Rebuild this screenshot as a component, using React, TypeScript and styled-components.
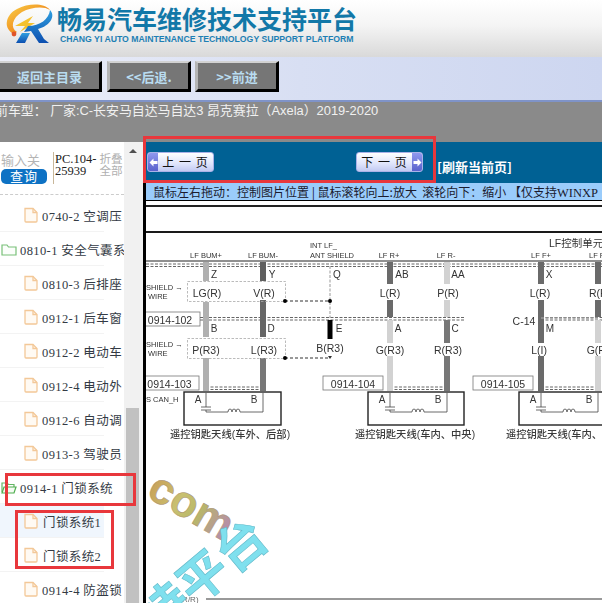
import React from "react";
import styled, { createGlobalStyle } from "styled-components";

const Global = createGlobalStyle`
  html, body { margin: 0; padding: 0; background: #fff; overflow: hidden; }
  * { box-sizing: border-box; }
`;

const CJK = `"Noto Sans CJK SC", sans-serif`;

const Page = styled.div`
  position: relative;
  width: 602px;
  height: 603px;
  overflow: hidden;
  font-family: "Liberation Sans", ${CJK};
`;

const Header = styled.header`
  height: 57px;
  display: flex;
  align-items: flex-start;
  background: linear-gradient(180deg, #ffffff 0%, #f4f4f4 45%, #d9d9d9 100%);
`;

const Logo = styled.svg`
  width: 56px;
  height: 46px;
  flex: none;
  margin-top: 1px;
`;

const Brand = styled.div`
  margin-left: 1px;
  display: flex;
  flex-direction: column;
  align-items: flex-start;
`;

const BrandTitle = styled.div`
  font-family: ${CJK};
  font-weight: 700;
  font-size: 25px;
  line-height: 26px;
  margin-top: 5px;
  color: #1278a8;
  white-space: nowrap;
`;

const BrandSub = styled.div`
  font-family: "Liberation Sans", sans-serif;
  font-weight: 700;
  font-size: 8.7px;
  line-height: 10px;
  margin-top: 3px;
  margin-left: 3px;
  color: #1d7fb4;
  white-space: nowrap;
`;

const NavBar = styled.nav`
  height: 45px;
  padding: 4px 0 0 0;
  display: flex;
  gap: 4px;
  align-items: flex-start;
  background: linear-gradient(90deg, #eceef8 0%, #d8dff3 50%, #cdd6f0 100%);
  border-bottom: 2px solid #7f93c8;
`;

const NavButton = styled.div<{ $w: number; $first?: boolean }>`
  width: ${(p) => p.$w}px;
  height: 31px;
  background: #767676;
  border-style: solid;
  border-width: 2px 3px 3px 3px;
  border-color: #d2d2d2 #000 #000 #b5b5b5;
  color: #b9dcf0;
  font-family: ${CJK};
  font-weight: 700;
  font-size: 13px;
  display: flex;
  align-items: center;
  justify-content: center;
  ${(p) => (p.$first ? "margin-right: 1px; border-left: 0;" : "")}
`;

const StatusBar = styled.div`
  height: 40px;
  background: #8a8a8a;
  color: #f0f0f0;
  font-size: 12.9px;
  line-height: 18px;
  white-space: nowrap;
  overflow: hidden;
`;

const StatusText = styled.div`
  margin-left: -5px;
`;

const Main = styled.div`
  display: flex;
  height: 461px;
`;

const Sidebar = styled.aside`
  width: 124px;
  flex: none;
  overflow: hidden;
  background: #fff;
`;

const SearchRow = styled.div`
  height: 53px;
  margin-bottom: 3px;
  padding-top: 10px;
  display: flex;
  border-bottom: 1px dashed #ccc;
`;

const SearchCol = styled.div`
  width: 54px;
  flex: none;
  padding-left: 1px;
  border-right: 1px solid #c8b79a;
  height: 32px;
`;

const SearchHint = styled.div`
  color: #b4b4b4;
  font-size: 13px;
  line-height: 17px;
  height: 17px;
`;

const SearchBtn = styled.div`
  width: 46px;
  height: 15px;
  background: #0e72c4;
  border-radius: 5px;
  color: #fff;
  font-size: 13px;
  line-height: 15px;
  text-align: center;
  letter-spacing: 1px;
`;

const Code = styled.div`
  width: 45px;
  flex: none;
  font-family: "Liberation Serif", serif;
  font-size: 12.5px;
  line-height: 12px;
  color: #222;
  padding-left: 1px;
  margin-top: 1px;
  word-break: break-all;
`;

const Collapse = styled.div`
  color: #b0b0b0;
  font-size: 11.6px;
  line-height: 12px;
  margin-top: 1px;
  width: 24px;
  text-align: center;
  flex: none;
`;

const Row = styled.div<{ $kind: "file" | "folder" | "child"; $active?: boolean }>`
  height: 34px;
  display: flex;
  align-items: center;
  white-space: nowrap;
  padding-left: ${(p) => (p.$kind === "folder" ? 1 : 24)}px;
  gap: ${(p) => (p.$kind === "folder" ? 3 : p.$kind === "child" ? 5 : 4)}px;
  color: #333a44;
  font-family: "Liberation Serif", ${CJK};
  font-size: 12.5px;
  letter-spacing: 0.4px;
  position: relative;
  &::after {
    content: "";
    position: absolute;
    left: 0;
    width: 104px;
    bottom: 0;
    height: 1px;
    background: #f3f3f3;
  }
  ${(p) =>
    p.$active
      ? `background: linear-gradient(90deg, #f0f6fd 0, #f0f6fd 104px, transparent 104px);`
      : ""}
`;

const Track = styled.div`
  width: 19px;
  flex: none;
  padding-left: 2px;
  background: #f1f1f1;
  display: flex;
  flex-direction: column;
`;

const ScrollUp = styled.div`
  height: 20px;
  position: relative;
  &::before {
    content: "";
    position: absolute;
    left: 3px;
    top: 7px;
    border-left: 4px solid transparent;
    border-right: 4px solid transparent;
    border-bottom: 4px solid #505050;
  }
`;

const Thumb = styled.div`
  margin-top: 246px;
  width: 13px;
  flex: 1;
  background: #c1c1c1;
`;

const Content = styled.section`
  flex: 1;
  min-width: 0;
  border-left: 3px solid #000;
  display: flex;
  flex-direction: column;
`;

const BlueBand = styled.div`
  height: 41px;
  background: #006194;
  display: flex;
  padding: 10px 0 0 1px;
  align-items: flex-start;
`;

const PageBtn = styled.div<{ $next?: boolean }>`
  width: 67px;
  height: 20px;
  display: flex;
  flex-direction: ${(p) => (p.$next ? "row-reverse" : "row")};
  align-items: stretch;
  border: 1px solid #aab2e8;
  border-radius: 3px;
  overflow: hidden;
  background: linear-gradient(180deg, #ffffff 0%, #dfe4fb 60%, #c2caf2 100%);
  margin-left: ${(p) => (p.$next ? "142px" : "0")};
  font-family: ${CJK};
  font-size: 12px;
  color: #111;
`;

const PageBtnIcon = styled.span`
  width: 10px;
  flex: none;
  background: linear-gradient(180deg, #8f98ee, #5a62cc);
  display: flex;
  align-items: center;
  justify-content: center;
`;

const PageBtnLabel = styled.span`
  flex: 1;
  text-align: center;
  line-height: 17px;
  letter-spacing: 1px;
`;

const Refresh = styled.div`
  color: #fff;
  font-family: ${CJK};
  font-weight: 700;
  font-size: 13px;
  line-height: 18px;
  margin: 6px 0 0 14px;
  white-space: nowrap;
`;

const HintBar = styled.div`
  height: 18px;
  background: #9accfb;
  border-bottom: 1px solid #000;
  padding-left: 7px;
  font-family: ${CJK};
  font-size: 12px;
  line-height: 17px;
  color: #1b1b2e;
  white-space: pre;
  overflow: hidden;
`;

const HintLatin = styled.span`
  font-family: "Liberation Serif", serif;
  font-size: 12.5px;
`;

const Spacer = styled.div`
  height: 6px;
  background: #fff;
  border-bottom: 2px solid #222;
`;

const Strip = styled.div`
  height: 26px;
  background: #fff;
  border-bottom: 2px solid #1a1a1a;
`;

const Diagram = styled.svg`
  display: block;
  flex: 1;
  width: 100%;
  min-height: 0;
  filter: blur(0.35px);
  font-family: "Liberation Sans", ${CJK};
`;

const RedBox = styled.div<{ $x: number; $y: number; $w: number; $h: number }>`
  position: absolute;
  left: ${(p) => p.$x}px;
  top: ${(p) => p.$y}px;
  width: ${(p) => p.$w}px;
  height: ${(p) => p.$h}px;
  border: 3px solid #e8373c;
  pointer-events: none;
`;

const Watermark = styled.svg`
  position: absolute;
  left: 146px;
  top: 463px;
  width: 170px;
  height: 140px;
  pointer-events: none;
  font-family: "Liberation Sans", ${CJK};
  font-weight: 700;
`;

const FileIcon = () => (
  <svg width="14" height="16" viewBox="0 0 14 16" style={{ flex: "none" }}>
    <path d="M1 1.5h8l4 4V14a1 1 0 0 1-1 1H2a1 1 0 0 1-1-1z" fill="#fffaf3" stroke="#f3c898" strokeWidth="1.3" />
    <path d="M9 1.5v4h4" fill="none" stroke="#f3c898" strokeWidth="1.3" />
  </svg>
);

const FolderIcon = ({ open }: { open?: boolean }) => (
  <svg width="16" height="13" viewBox="0 0 16 13" style={{ flex: "none" }}>
    {open ? (
      <>
        <path d="M1 11V2h5l1.5 1.5H13V6" fill="none" stroke="#64b564" strokeWidth="1.2" />
        <path d="M3 6h12l-2 6H1z" fill="#f4fbf3" stroke="#4fae4f" strokeWidth="1.2" />
      </>
    ) : (
      <path d="M1 2h5l1.5 2H15v8H1z" fill="#fbfefb" stroke="#78c078" strokeWidth="1.2" />
    )}
  </svg>
);

const Arrow = ({ dir }: { dir: "l" | "r" }) => (
  <svg width="9" height="9" viewBox="0 0 9 9">
    <path d={dir === "l" ? "M0.5 4.5L4.5 0.5V3H8.5V6H4.5V8.5z" : "M8.5 4.5L4.5 0.5V3H0.5V6H4.5V8.5z"} fill="#fff" />
  </svg>
);

type Seg = [number, number, string];

const Wire = ({ x, segs, w = 6 }: { x: number; segs: Seg[]; w?: number }) => (
  <>
    {segs.map(([a, b, c], i) => (
      <line key={i} x1={x} x2={x} y1={a} y2={b} stroke={c} strokeWidth={w} />
    ))}
  </>
);

const Bus = ({ x1, x2, y }: { x1: number; x2: number; y: number }) => (
  <>
    <line x1={x1} x2={x2} y1={y} y2={y} stroke="#666" strokeWidth="1" strokeDasharray="3 1.5" />
    <line x1={x1} x2={x2} y1={y + 2.5} y2={y + 2.5} stroke="#666" strokeWidth="1" strokeDasharray="3 1.5" />
  </>
);

const Lbl = ({ x, y, s = 10.5, a = "middle", c = "#333", w, children }: { x: number; y: number; s?: number; a?: "start" | "middle" | "end"; c?: string; w?: number; children: React.ReactNode }) => (
  <text x={x} y={y} fontSize={s} textAnchor={a} fill={c} fontWeight={w}>{children}</text>
);

const Antenna = ({ x, w, title, tx }: { x: number; w: number; title: string; tx: number }) => (
  <>
    <rect x={x} y={394} width={w} height={33} fill="#fff" stroke="#222" strokeWidth="1.4" />
    <Lbl x={x + 14} y={405} s={10}>A</Lbl>
    <Lbl x={x + 70} y={405} s={10}>B</Lbl>
    <path d={`M${x + 22} 395V409M${x + 17} 409H${x + 27}M${x + 17} 412H${x + 27}M${x + 22} 412V414H${x + 44}M${x + 44} 414a2 3 0 0 1 4 0a2 3 0 0 1 4 0a2 3 0 0 1 4 0M${x + 56} 414H${x + 79}V395`} fill="none" stroke="#444" strokeWidth="0.8" />
    <Lbl x={tx} y={440} s={10.3} c="#3a3a3a" w={500}>{title}</Lbl>
  </>
);

const TagBox = ({ x, y, w, t }: { x: number; y: number; w: number; t: string }) => (
  <>
    <rect x={x} y={y} width={w} height={14} fill="#fff" stroke="#777" strokeWidth="0.8" />
    <Lbl x={x + w / 2} y={y + 11.5} s={10.5}>{t}</Lbl>
  </>
);

const L1 = "#777";
const L2 = "#b0b0b0";
const L3 = "#d2d2d2";

const rows: { kind: "file" | "folder" | "child"; text: string; open?: boolean; active?: boolean }[] = [
  { kind: "file", text: "0740-2 空调压" },
  { kind: "folder", text: "0810-1 安全气囊系" },
  { kind: "file", text: "0810-3 后排座" },
  { kind: "file", text: "0912-1 后车窗" },
  { kind: "file", text: "0912-2 电动车" },
  { kind: "file", text: "0912-4 电动外" },
  { kind: "file", text: "0912-6 自动调" },
  { kind: "file", text: "0913-3 驾驶员" },
  { kind: "folder", text: "0914-1 门锁系统", open: true },
  { kind: "child", text: "门锁系统1", active: true },
  { kind: "child", text: "门锁系统2" },
  { kind: "file", text: "0914-4 防盗锁" },
];

export default function App() {
  return (
    <Page>
      <Global />
      <Header>
        <Logo viewBox="0 0 56 46">
          <defs>
            <linearGradient id="sw" x1="0" y1="0" x2="1" y2="1">
              <stop offset="0" stopColor="#f9d34a" />
              <stop offset="0.6" stopColor="#f08a1e" />
              <stop offset="1" stopColor="#d9541a" />
            </linearGradient>
            <linearGradient id="rb" x1="0" y1="0" x2="0" y2="1">
              <stop offset="0" stopColor="#2f9fe0" />
              <stop offset="1" stopColor="#0d4fb0" />
            </linearGradient>
          </defs>
          <path d="M14 33C3 28 5 14 17 8C29 2 44 2 50 9C44 5 31 6 22 11C12 17 10 27 17 31z" fill="url(#sw)" />
          <path d="M15 25L33 15L28 22L35 22L20 31L25 25z" fill="#f5c22e" />
          <circle cx="14" cy="33" r="2.4" fill="#e0552a" />
          <path d="M50 9C56 15 50 25 38 28L44 38L49 42H39L31 30L24 31L28 25C40 25 49 18 50 9z" fill="url(#rb)" />
          <path d="M22 32H30L25 42H16z" fill="url(#rb)" />
        </Logo>
        <Brand>
          <BrandTitle>畅易汽车维修技术支持平台</BrandTitle>
          <BrandSub>CHANG YI AUTO MAINTENANCE TECHNOLOGY SUPPORT PLATFORM</BrandSub>
        </Brand>
      </Header>

      <NavBar>
        <NavButton $w={102} $first>返回主目录</NavButton>
        <NavButton $w={84}>&lt;&lt;后退.</NavButton>
        <NavButton $w={84}>&gt;&gt;前进</NavButton>
      </NavBar>

      <StatusBar>
        <StatusText>前车型： 厂家:C-长安马自达马自达3 昂克赛拉（Axela）2019-2020</StatusText>
      </StatusBar>

      <Main>
        <Sidebar>
          <SearchRow>
            <SearchCol>
              <SearchHint>输入关</SearchHint>
              <SearchBtn>查询</SearchBtn>
            </SearchCol>
            <Code>PC.104-25939</Code>
            <Collapse>折叠全部</Collapse>
          </SearchRow>
          {rows.map((r) => (
            <Row key={r.text} $kind={r.kind} $active={r.active}>
              {r.kind === "folder" ? <FolderIcon open={r.open} /> : <FileIcon />}
              <span>{r.text}</span>
            </Row>
          ))}
        </Sidebar>
        <Track>
          <ScrollUp />
          <Thumb />
        </Track>
        <Content>
          <BlueBand>
            <PageBtn>
              <PageBtnIcon><Arrow dir="l" /></PageBtnIcon>
              <PageBtnLabel>上 一 页</PageBtnLabel>
            </PageBtn>
            <PageBtn $next>
              <PageBtnIcon><Arrow dir="r" /></PageBtnIcon>
              <PageBtnLabel>下 一 页</PageBtnLabel>
            </PageBtn>
            <Refresh>[刷新当前页]</Refresh>
          </BlueBand>
          <HintBar>鼠标左右拖动：控制图片位置 | 鼠标滚轮向上:放大  滚轮向下：缩小 【仅支持<HintLatin>WINXP</HintLatin></HintBar>
          <Spacer />
          <Strip />
          <Diagram viewBox="146 235 456 370">
            <rect x="146" y="235" width="456" height="370" fill="#fff" />
            <Lbl x={549} y={249} s={10.5} a="start">LF控制单元</Lbl>
            <line x1="146" x2="602" y1="263" y2="263" stroke="#222" strokeWidth="1.2" />
            <Bus x1={146} x2={602} y={266} />
            <Bus x1={146} x2={465} y={319.5} />
            <Bus x1={541} x2={602} y={319.5} />
            <Bus x1={206} x2={263} y={389} />
            <Bus x1={390} x2={447} y={389} />
            <Bus x1={541} x2={598} y={389} />

            <Lbl x={206} y={260} s={7.5}>LF BUM+</Lbl>
            <Lbl x={263} y={260} s={7.5}>LF BUM-</Lbl>
            <Lbl x={310} y={250} s={7.5} a="start">INT LF_</Lbl>
            <Lbl x={310} y={260} s={7.5} a="start">ANT SHIELD</Lbl>
            <Lbl x={389} y={260} s={7.5}>LF R+</Lbl>
            <Lbl x={446} y={260} s={7.5}>LF R-</Lbl>
            <Lbl x={541} y={260} s={7.5}>LF F+</Lbl>
            <Lbl x={598} y={260} s={7.5}>LF F-</Lbl>

            <Wire x={206} segs={[[264, 283, L2], [304, 339, L2], [360, 393, L2]]} />
            <Wire x={263} segs={[[264, 283, "#5f5f5f"], [302, 339, "#666"], [360, 393, "#777"]]} />
            <Wire x={390} segs={[[264, 286, "#6a6a6a"], [302, 319, "#6a6a6a"], [322, 345, L3], [358, 393, L3]]} />
            <Wire x={447} segs={[[264, 286, L3], [302, 319, L3], [322, 345, L1], [358, 393, L1]]} />
            <Wire x={541} segs={[[264, 286, "#6a6a6a"], [302, 345, "#6a6a6a"], [358, 393, "#6a6a6a"]]} />
            <Wire x={598} segs={[[264, 286, "#6a6a6a"], [302, 319, "#6a6a6a"], [322, 345, L3], [358, 393, L3]]} />
            <line x1="330" x2="330" y1="268" y2="320" stroke="#999" strokeWidth="1" strokeDasharray="3 1.5" />
            <rect x="327.5" y="322" width="5" height="19" fill="#000" />

            <rect x="187.5" y="283.5" width="98" height="20" fill="none" stroke="#aaa" strokeWidth="0.8" strokeDasharray="2.5 1.5" />
            <rect x="187.5" y="340.5" width="98" height="20" fill="none" stroke="#aaa" strokeWidth="0.8" strokeDasharray="2.5 1.5" />
            <line x1="285" x2="330" y1="303" y2="303" stroke="#333" strokeWidth="1" strokeDasharray="3 2" />
            <line x1="285" x2="330" y1="360" y2="360" stroke="#333" strokeWidth="1" strokeDasharray="3 2" />
            <circle cx="285" cy="303" r="2" fill="#000" />
            <circle cx="330" cy="303" r="2" fill="#000" />
            <circle cx="285" cy="360" r="2" fill="#000" />
            <path d="M328 358h4l-2 3z" fill="#333" />
            <line x1="541" x2="598" y1="320" y2="320" stroke="#999" strokeWidth="1.6" strokeDasharray="3 1.5" />

            <Lbl x={214} y={280} s={10}>Z</Lbl>
            <Lbl x={272} y={280} s={10}>Y</Lbl>
            <Lbl x={337} y={280} s={10}>Q</Lbl>
            <Lbl x={214} y={334} s={10}>B</Lbl>
            <Lbl x={271} y={334} s={10}>D</Lbl>
            <Lbl x={339} y={334} s={10}>E</Lbl>
            <Lbl x={402} y={280} s={10}>AB</Lbl>
            <Lbl x={458} y={280} s={10}>AA</Lbl>
            <Lbl x={398} y={334} s={10}>A</Lbl>
            <Lbl x={455} y={334} s={10}>C</Lbl>
            <Lbl x={549} y={280} s={10}>X</Lbl>
            <Lbl x={550} y={334} s={10}>M</Lbl>
            <Lbl x={524} y={327} s={10.5}>C-14</Lbl>

            <Lbl x={207} y={299} s={10.5}>LG(R)</Lbl>
            <Lbl x={264} y={299} s={10.5}>V(R)</Lbl>
            <Lbl x={206} y={356} s={10.5}>P(R3)</Lbl>
            <Lbl x={264} y={356} s={10.5}>L(R3)</Lbl>
            <Lbl x={330} y={354} s={10.5}>B(R3)</Lbl>
            <Lbl x={390} y={299} s={10.5}>L(R)</Lbl>
            <Lbl x={448} y={299} s={10.5}>P(R)</Lbl>
            <Lbl x={390} y={356} s={10.5}>G(R3)</Lbl>
            <Lbl x={448} y={356} s={10.5}>R(R3)</Lbl>
            <Lbl x={540} y={299} s={10.5}>L(R)</Lbl>
            <Lbl x={600} y={299} s={10.5}>R(R)</Lbl>
            <Lbl x={539} y={356} s={10.5}>L(I)</Lbl>
            <Lbl x={601} y={356} s={10.5}>G(R3)</Lbl>

            <Lbl x={146} y={292} s={7.5} a="start">SHIELD →</Lbl>
            <Lbl x={148} y={301} s={7.5} a="start">WIRE</Lbl>
            <Lbl x={146} y={349} s={7.5} a="start">SHIELD →</Lbl>
            <Lbl x={148} y={358} s={7.5} a="start">WIRE</Lbl>

            <TagBox x={140} y={314} w={60} t="0914-102" />
            <TagBox x={140} y={378} w={59} t="0914-103" />
            <TagBox x={323} y={378} w={60} t="0914-104" />
            <TagBox x={473} y={378} w={60} t="0914-105" />
            <Lbl x={146} y={404} s={7.5} a="start">S CAN_H</Lbl>

            <Antenna x={184} w={97} tx={230} title="遥控钥匙天线(车外、后部)" />
            <Antenna x={368} w={96} tx={415} title="遥控钥匙天线(车内、中央)" />
            <Antenna x={519} w={110} tx={566} title="遥控钥匙天线(车内、前部)" />

            <Lbl x={189} y={604} s={8} c="#666">(R/R)</Lbl>
            <rect x="206" y="600" width="396" height="2" fill="#999" />
          </Diagram>
        </Content>
      </Main>

      <Watermark viewBox="0 0 170 140">
        <defs>
          <linearGradient id="wm" x1="0" y1="0" x2="1" y2="0">
            <stop offset="0" stopColor="#c9a25a" />
            <stop offset="0.35" stopColor="#c8c070" />
            <stop offset="0.6" stopColor="#b8b868" />
            <stop offset="1" stopColor="#b68ab0" />
          </linearGradient>
        </defs>
        <text x="0" y="0" fontSize="44" fill="url(#wm)" stroke="#a88f70" strokeWidth="0.5" transform="translate(-1 33) rotate(30)">com</text>
        <text x="0" y="0" fontSize="50" fill="#7fe0ee" stroke="#63b9c9" strokeWidth="0.6" transform="translate(11 176) rotate(-40)">持平台</text>
      </Watermark>

      <RedBox $x={143} $y={136} $w={293} $h={47} />
      <RedBox $x={5} $y={473} $w={131} $h={33} />
      <RedBox $x={15} $y={510} $w={99} $h={59} />
    </Page>
  );
}
